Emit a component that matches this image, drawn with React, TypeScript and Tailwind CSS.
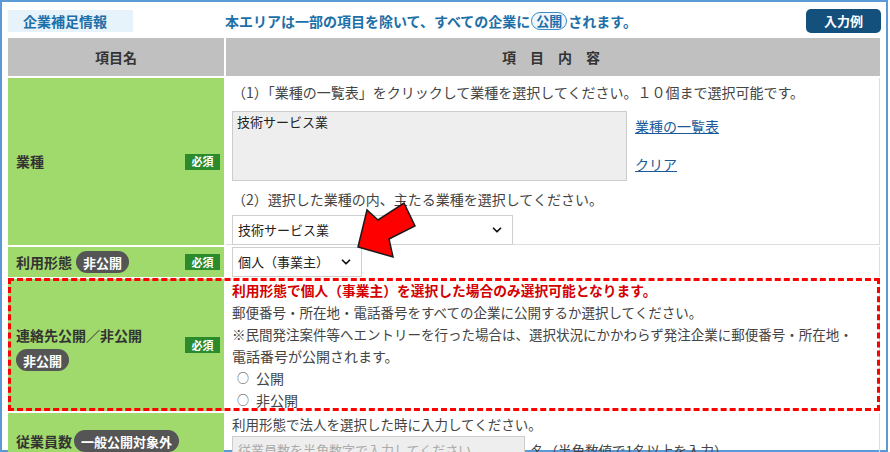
import { ChevronDown } from 'lucide-react';

const font = { fontFamily: '"Noto Sans CJK JP", "Noto Sans", sans-serif' };

function Required() {
  return (
    <span className="flex h-[16px] w-[35px] items-center justify-center bg-[#2b8a2b] text-[11px] leading-none text-white">
      必須
    </span>
  );
}

function Private({ children }: { children: string }) {
  return (
    <span className="inline-flex h-[22px] items-center rounded-full bg-[#555555] px-[7px] text-[13px] font-bold leading-none text-white">
      {children}
    </span>
  );
}

function FakeSelect({ value, width }: { value: string; width: string }) {
  return (
    <div
      className={`flex h-[30px] items-center justify-between border border-[#cfcfcf] bg-white pl-[5px] pr-[8px] text-[13px] text-[#222] ${width}`}
    >
      <span>{value}</span>
      <ChevronDown size={14} strokeWidth={3} className="text-[#111]" />
    </div>
  );
}

function Radio({ label }: { label: string }) {
  return (
    <p className="flex items-center pl-[5px]">
      <span className="mr-[7px] text-[12px]">○</span>
      {label}
    </p>
  );
}

export default function App() {
  return (
    <div className="relative h-[452px] w-[890px] overflow-hidden bg-white" style={font}>
      <div className="h-[452px] w-[888px] border-2 border-[#5b9bd5] bg-white pl-[6px] pr-[6px]">
        {/* top bar */}
        <div className="flex h-[36px] items-center pt-[2px]">
          <div className="flex h-[22px] w-[125px] items-center bg-[#e6f3fb] pl-[15px] text-[14px] font-bold text-[#1d6fa8]">
            企業補足情報
          </div>
          <div className="ml-[92px] flex items-center text-[14px] font-bold text-[#1d6fa8]">
            本エリアは一部の項目を除いて、すべての企業に
            <span className="mx-[1px] flex h-[18px] items-center rounded-full border border-[#3b8cc4] bg-[#eef7fd] px-[4px] text-[13px]">
              公開
            </span>
            されます。
          </div>
          <div className="ml-auto mr-[-1px] flex h-[24px] w-[75px] items-center justify-center rounded-[5px] bg-[#13507c] text-[13px] font-bold text-white">
            入力例
          </div>
        </div>

        {/* header row */}
        <div className="flex h-[38px] gap-[2px] text-[14px] font-bold text-[#333]">
          <div className="flex w-[216px] items-center justify-center bg-[#c0c0c0]">項目名</div>
          <div className="flex flex-1 items-center justify-center bg-[#c0c0c0] pr-[4px]">項　目　内　容</div>
        </div>

        {/* 業種 */}
        <div className="mt-[2px] flex h-[167px] gap-[2px]">
          <div className="flex w-[216px] items-center justify-between bg-[#a0d96c] pl-[8px] pr-[4px] text-[14px] font-bold text-[#333]">
            <span>業種</span>
            <Required />
          </div>
          <div className="flex-1 border-b border-r border-[#dddddd] pl-[6px] text-[14px] leading-[22px] text-[#444]">
            <p className="pt-[3px]">（1）「業種の一覧表」をクリックして業種を選択してください。１０個まで選択可能です。</p>
            <div className="mt-[8px] flex">
              <div className="h-[70px] w-[395px] border border-[#cccccc] bg-[#eeeeee] px-[4px] text-[13px] leading-[20px] text-[#222]">
                技術サービス業
              </div>
              <div className="ml-[8px] flex flex-col pt-[4px] text-[14px] text-[#1a5a9a]">
                <span className="underline">業種の一覧表</span>
                <span className="mt-[16px] underline">クリア</span>
              </div>
            </div>
            <p className="mt-[7px]">（2）選択した業種の内、主たる業種を選択してください。</p>
            <div className="mt-[5px]">
              <FakeSelect value="技術サービス業" width="w-[281px]" />
            </div>
          </div>
        </div>

        {/* 利用形態 */}
        <div className="mt-[2px] flex h-[30px] gap-[2px]">
          <div className="flex w-[216px] items-center justify-between bg-[#a0d96c] pl-[8px] pr-[4px] text-[14px] font-bold text-[#333]">
            <span className="flex items-center gap-[4px]">
              利用形態
              <Private>非公開</Private>
            </span>
            <Required />
          </div>
          <div className="flex-1 border-r border-[#dddddd] pl-[6px]">
            <FakeSelect value="個人（事業主）" width="w-[130px]" />
          </div>
        </div>

        {/* 連絡先公開／非公開 */}
        <div className="relative mt-[2px] flex h-[132px] gap-[2px]">
          <div className="flex w-[216px] items-center justify-between bg-[#a0d96c] pl-[8px] pr-[4px] text-[14px] font-bold text-[#333]">
            <div className="flex flex-col gap-[3px] pt-[6px]">
              <span>連絡先公開／非公開</span>
              <span>
                <Private>非公開</Private>
              </span>
            </div>
            <Required />
          </div>
          <div className="flex-1 border-r border-[#dddddd] pl-[6px] text-[13.5px] leading-[22px] text-[#444]">
            <p className="text-[13.75px] font-bold text-[#d40000]">利用形態で個人（事業主）を選択した場合のみ選択可能となります。</p>
            <p>郵便番号・所在地・電話番号をすべての企業に公開するか選択してください。</p>
            <p>※民間発注案件等へエントリーを行った場合は、選択状況にかかわらず発注企業に郵便番号・所在地・</p>
            <p className="text-[14px]">電話番号が公開されます。</p>
            <div className="text-[14px]">
              <Radio label="公開" />
              <Radio label="非公開" />
            </div>
          </div>
          <div className="absolute inset-0 -top-[1px] border-[3px] border-dashed border-[#ff0000]" />
        </div>

        {/* 従業員数 */}
        <div className="mt-[2px] flex h-[60px] gap-[2px]">
          <div className="flex w-[216px] items-start bg-[#a0d96c] pl-[8px] pt-[17px] text-[14px] font-bold text-[#333]">
            <span className="flex items-center gap-[2px]">
              従業員数
              <Private>一般公開対象外</Private>
            </span>
          </div>
          <div className="flex-1 border-r border-[#dddddd] pl-[6px] text-[13.5px] leading-[22px] text-[#444]">
            <p>利用形態で法人を選択した時に入力してください。</p>
            <div className="mt-[1px] flex items-center">
              <div className="h-[28px] w-[293px] border border-[#cccccc] bg-[#eeeeee] px-[5px] text-[13px] leading-[26px] text-[#aaaaaa]">
                従業員数を半角数字で入力してください
              </div>
              <span className="ml-[6px]">名（半角数値で1名以上を入力）</span>
            </div>
          </div>
        </div>
      </div>

      {/* annotation arrow */}
      <svg className="absolute left-[350px] top-[198px]" width="70" height="65" viewBox="0 0 70 65">
        <polygon
          points="8,49 17,12 28,22 54,5 65,28 39,41 43,59"
          fill="#ff0000"
          stroke="#1a1a1a"
          strokeWidth="1.5"
          strokeLinejoin="miter"
        />
      </svg>
    </div>
  );
}
